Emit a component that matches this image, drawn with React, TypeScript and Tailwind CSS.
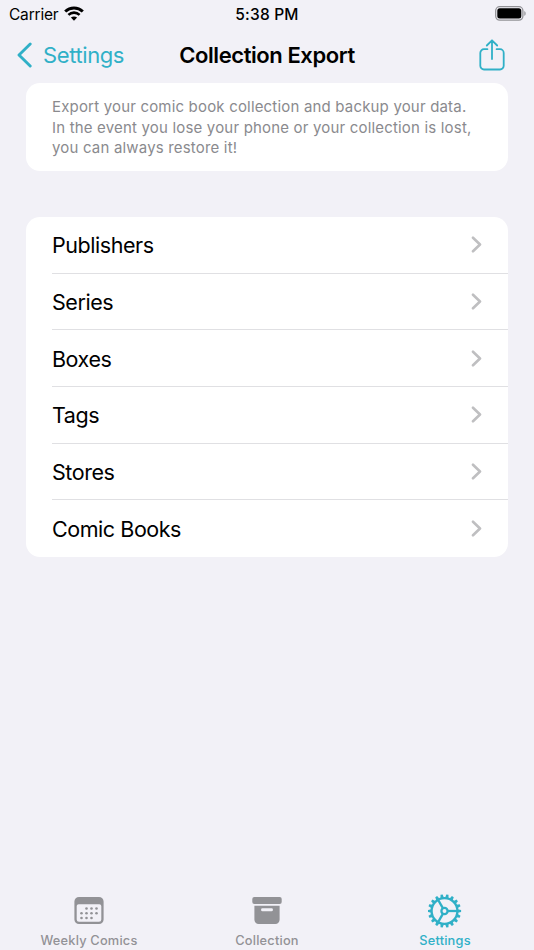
import React from "react";

const rows = ["Publishers", "Series", "Boxes", "Tags", "Stores", "Comic Books"];

const dots: [number, number][] = [
  [12.5, 11.5], [17.5, 11.5], [22.5, 11.5],
  [7.5, 16.2], [12.5, 16.2], [17.5, 16.2], [22.5, 16.2],
  [7.5, 21], [12.5, 21], [17.5, 21],
];

function StatusBar() {
  return (
    <div className="grid h-7 grid-cols-3 items-center text-black">
      <div className="flex items-center gap-[6px] pl-[9px]">
        <span className="text-[15.5px] leading-7 tracking-[-0.2px]">Carrier</span>
        <svg className="-mt-[3px]" width="20" height="15" viewBox="0 0 20 15" fill="none" stroke="#000" strokeWidth="3">
          <path d="M1.2 5.5C6.2.8 13.8.8 18.8 5.5" />
          <path d="M4.4 8.9c3.2-3 8-3 11.2 0" strokeWidth="2.6" />
          <path d="M10 14.7 6.9 11.6c1.8-1.6 4.4-1.6 6.2 0Z" fill="#000" stroke="none" />
        </svg>
      </div>
      <div className="pt-px text-center text-[15.5px] font-medium leading-7 tracking-[0.2px]">5:38 PM</div>
      <div className="flex justify-end pr-[8px]">
        <svg className="-mt-[2px]" width="31" height="15" viewBox="0 0 31 15">
          <rect x=".7" y=".7" width="27.2" height="13.4" rx="4" fill="none" stroke="#929296" strokeWidth="1.3" />
          <rect x="2.3" y="2.3" width="24" height="10.2" rx="2.5" fill="#000" />
          <path d="M29.3 5c1.8.7 1.8 4.1 0 4.8Z" fill="#929296" />
        </svg>
      </div>
    </div>
  );
}

function NavBar() {
  return (
    <div className="grid h-[55px] grid-cols-[160px_1fr_160px] items-center pb-[2px]">
      <div className="flex items-center gap-[11px] pl-[17px] text-[#30b0c7]">
        <svg width="15" height="26" viewBox="0 0 15 26" fill="none" stroke="currentColor" strokeWidth="2.9" strokeLinecap="round" strokeLinejoin="round">
          <path d="M13.2 2 2 13l11.2 11" />
        </svg>
        <span className="text-[22px] leading-7 tracking-[-0.4px]">Settings</span>
      </div>
      <h1 className="whitespace-nowrap text-center text-[22px] font-semibold leading-7 tracking-[-0.42px] text-black">Collection Export</h1>
      <div className="flex justify-end pr-[29px]">
        <svg width="26" height="32" viewBox="0 0 26 32" fill="none" stroke="#30b0c7" strokeWidth="1.8" strokeLinecap="round" strokeLinejoin="round">
          <path d="M8.4 10.2H5A3.7 3.7 0 0 0 1.3 13.9v12.9A3.7 3.7 0 0 0 5 30.5h16a3.7 3.7 0 0 0 3.7-3.7V13.9a3.7 3.7 0 0 0-3.7-3.7h-3.4M13 20V1.4M7.8 6.5 13 1.3l5.2 5.2" />
        </svg>
      </div>
    </div>
  );
}

function CalendarIcon() {
  return (
    <svg width="30" height="28" viewBox="0 0 30 28" fill="#929296">
      <path fillRule="evenodd" d="M5 0h20a4.6 4.6 0 0 1 4.6 4.6v17.8A4.6 4.6 0 0 1 25 27H5a4.6 4.6 0 0 1-4.6-4.6V4.6A4.6 4.6 0 0 1 5 0ZM4.6 7.2A1.9 1.9 0 0 0 2.7 9v13.4a2.3 2.3 0 0 0 2.3 2.3h20a2.3 2.3 0 0 0 2.3-2.3V9a1.9 1.9 0 0 0-1.9-1.8Z" />
      {dots.map(([x, y]) => (
        <circle key={`${x}-${y}`} cx={x} cy={y} r="1.3" />
      ))}
    </svg>
  );
}

function ArchiveIcon() {
  return (
    <svg width="30" height="28" viewBox="0 0 30 28" fill="#929296">
      <rect x=".3" y="0" width="29.4" height="7" rx="2" />
      <path fillRule="evenodd" d="M2.4 8.8h25.2v14a4.2 4.2 0 0 1-4.2 4.2H6.6a4.2 4.2 0 0 1-4.2-4.2Zm8 2.4a1.3 1.3 0 0 0-1.3 1.3v.4a1.3 1.3 0 0 0 1.3 1.3h9.2a1.3 1.3 0 0 0 1.3-1.3v-.4a1.3 1.3 0 0 0-1.3-1.3Z" />
    </svg>
  );
}

function GearIcon() {
  const teeth = Array.from({ length: 18 }, (_, i) => i * 20);
  return (
    <svg width="34" height="34" viewBox="-16.5 -17 34 34" fill="none" stroke="#30b0c7" strokeWidth="2.3">
      <circle r="12.9" />
      <circle r="3.1" />
      {[0, 120, 240].map((a) => (
        <path key={a} d="M3 0H12.5" transform={`rotate(${a})`} />
      ))}
      {teeth.map((a) => (
        <path key={a} d="M13-1.8 16.6-1.1V1.1L13 1.8Z" fill="#30b0c7" stroke="none" transform={`rotate(${a})`} />
      ))}
    </svg>
  );
}

function Tab({ icon, label, color }: { icon: React.ReactNode; label: string; color: string }) {
  return (
    <div className={`flex flex-col items-center ${color}`}>
      <div className="flex h-[36px] items-center">{icon}</div>
      <span className="mt-[4px] whitespace-nowrap text-[12.8px] font-medium leading-4 tracking-[0.2px]">{label}</span>
    </div>
  );
}

export default function App() {
  return (
    <div className="flex h-[950px] w-[534px] flex-col overflow-hidden bg-[#f2f1f7] font-['Inter','Liberation_Sans',sans-serif]">
      <StatusBar />
      <NavBar />
      <main className="flex-1 px-[26px]">
        <section className="h-[88px] rounded-[14px] bg-white px-[26px] pt-[14px] text-[15px] leading-[20.6px] text-[#8a8a8e]">
          <p className="whitespace-nowrap tracking-[0.18px]">Export your comic book collection and backup your data.</p>
          <p className="whitespace-nowrap tracking-[0.18px]">In the event you lose your phone or your collection is lost,</p>
          <p className="whitespace-nowrap tracking-[0.18px]">you can always restore it!</p>
        </section>
        <ul className="mt-[46px] h-[340px] rounded-[14px] bg-white pl-[26px]">
          {rows.map((row, i) => (
            <li key={row} className={`flex h-[56.7px] items-center justify-between pt-px pr-[26px] ${i < rows.length - 1 ? "border-b border-[#e0e0e3]" : ""}`}>
              <span className="text-[21.5px] leading-7 tracking-[-0.45px] text-black">{row}</span>
              <svg className="-mt-px" width="11" height="17" viewBox="0 0 11 17" fill="none" stroke="#bfbfc1" strokeWidth="2.6" strokeLinecap="round" strokeLinejoin="round">
                <path d="m2 1.7 7 6.8-7 6.8" />
              </svg>
            </li>
          ))}
        </ul>
      </main>
      <nav className="grid h-[57px] grid-cols-3">
        <Tab icon={<CalendarIcon />} label="Weekly Comics" color="text-[#929296]" />
        <Tab icon={<ArchiveIcon />} label="Collection" color="text-[#929296]" />
        <Tab icon={<GearIcon />} label="Settings" color="text-[#30b0c7]" />
      </nav>
    </div>
  );
}
